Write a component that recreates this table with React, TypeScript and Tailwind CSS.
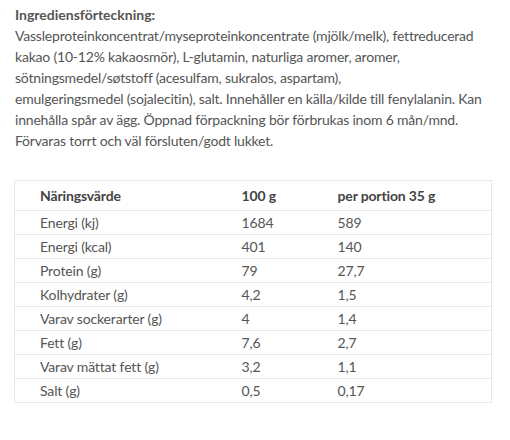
import React from "react";

const rows: [string, string, string][] = [
  ["Energi (kj)", "1684", "589"],
  ["Energi (kcal)", "401", "140"],
  ["Protein (g)", "79", "27,7"],
  ["Kolhydrater (g)", "4,2", "1,5"],
  ["Varav sockerarter (g)", "4", "1,4"],
  ["Fett (g)", "7,6", "2,7"],
  ["Varav mättat fett (g)", "3,2", "1,1"],
  ["Salt (g)", "0,5", "0,17"],
];

const lines = [
  "Vassleproteinkoncentrat/myseproteinkoncentrate (mjölk/melk), fettreducerad",
  "kakao (10-12% kakaosmör), L-glutamin, naturliga aromer, aromer,",
  "sötningsmedel/søtstoff (acesulfam, sukralos, aspartam),",
  "emulgeringsmedel (sojalecitin), salt. Innehåller en källa/kilde till fenylalanin. Kan",
  "innehålla spår av ägg. Öppnad förpackning bör förbrukas inom 6 mån/mnd.",
  "Förvaras torrt och väl försluten/godt lukket.",
];

export default function App() {
  return (
    <div className="w-[510px] h-[440px] bg-white text-[#555] text-[14px] leading-[21px] font-['Lato','Noto_Sans',sans-serif] pt-[4px] pl-[15px] pr-[18px]">
      <div className="font-bold">Ingrediensförteckning:</div>
      {lines.map((l, i) => (
        <div key={i} className="whitespace-nowrap tracking-[-0.2px]">{l}</div>
      ))}
      <table className="mt-[29px] w-[478px] -ml-[1px] border border-[#e8e8e8] border-collapse tracking-[-0.15px]">
        <thead>
          <tr className="h-[30px] border-b border-[#e8e8e8]">
            <th className="text-left font-bold pl-[25px] w-[227px] text-[#444]">Näringsvärde</th>
            <th className="text-left font-bold w-[96px] text-[#444]">100 g</th>
            <th className="text-left font-bold text-[#444]">per portion 35 g</th>
          </tr>
        </thead>
        <tbody>
          {rows.map((r, i) => (
            <tr key={i} className="h-[24px] border-b border-[#e8e8e8]">
              <td className="pl-[25px]">{r[0]}</td>
              <td>{r[1]}</td>
              <td>{r[2]}</td>
            </tr>
          ))}
        </tbody>
      </table>
    </div>
  );
}
